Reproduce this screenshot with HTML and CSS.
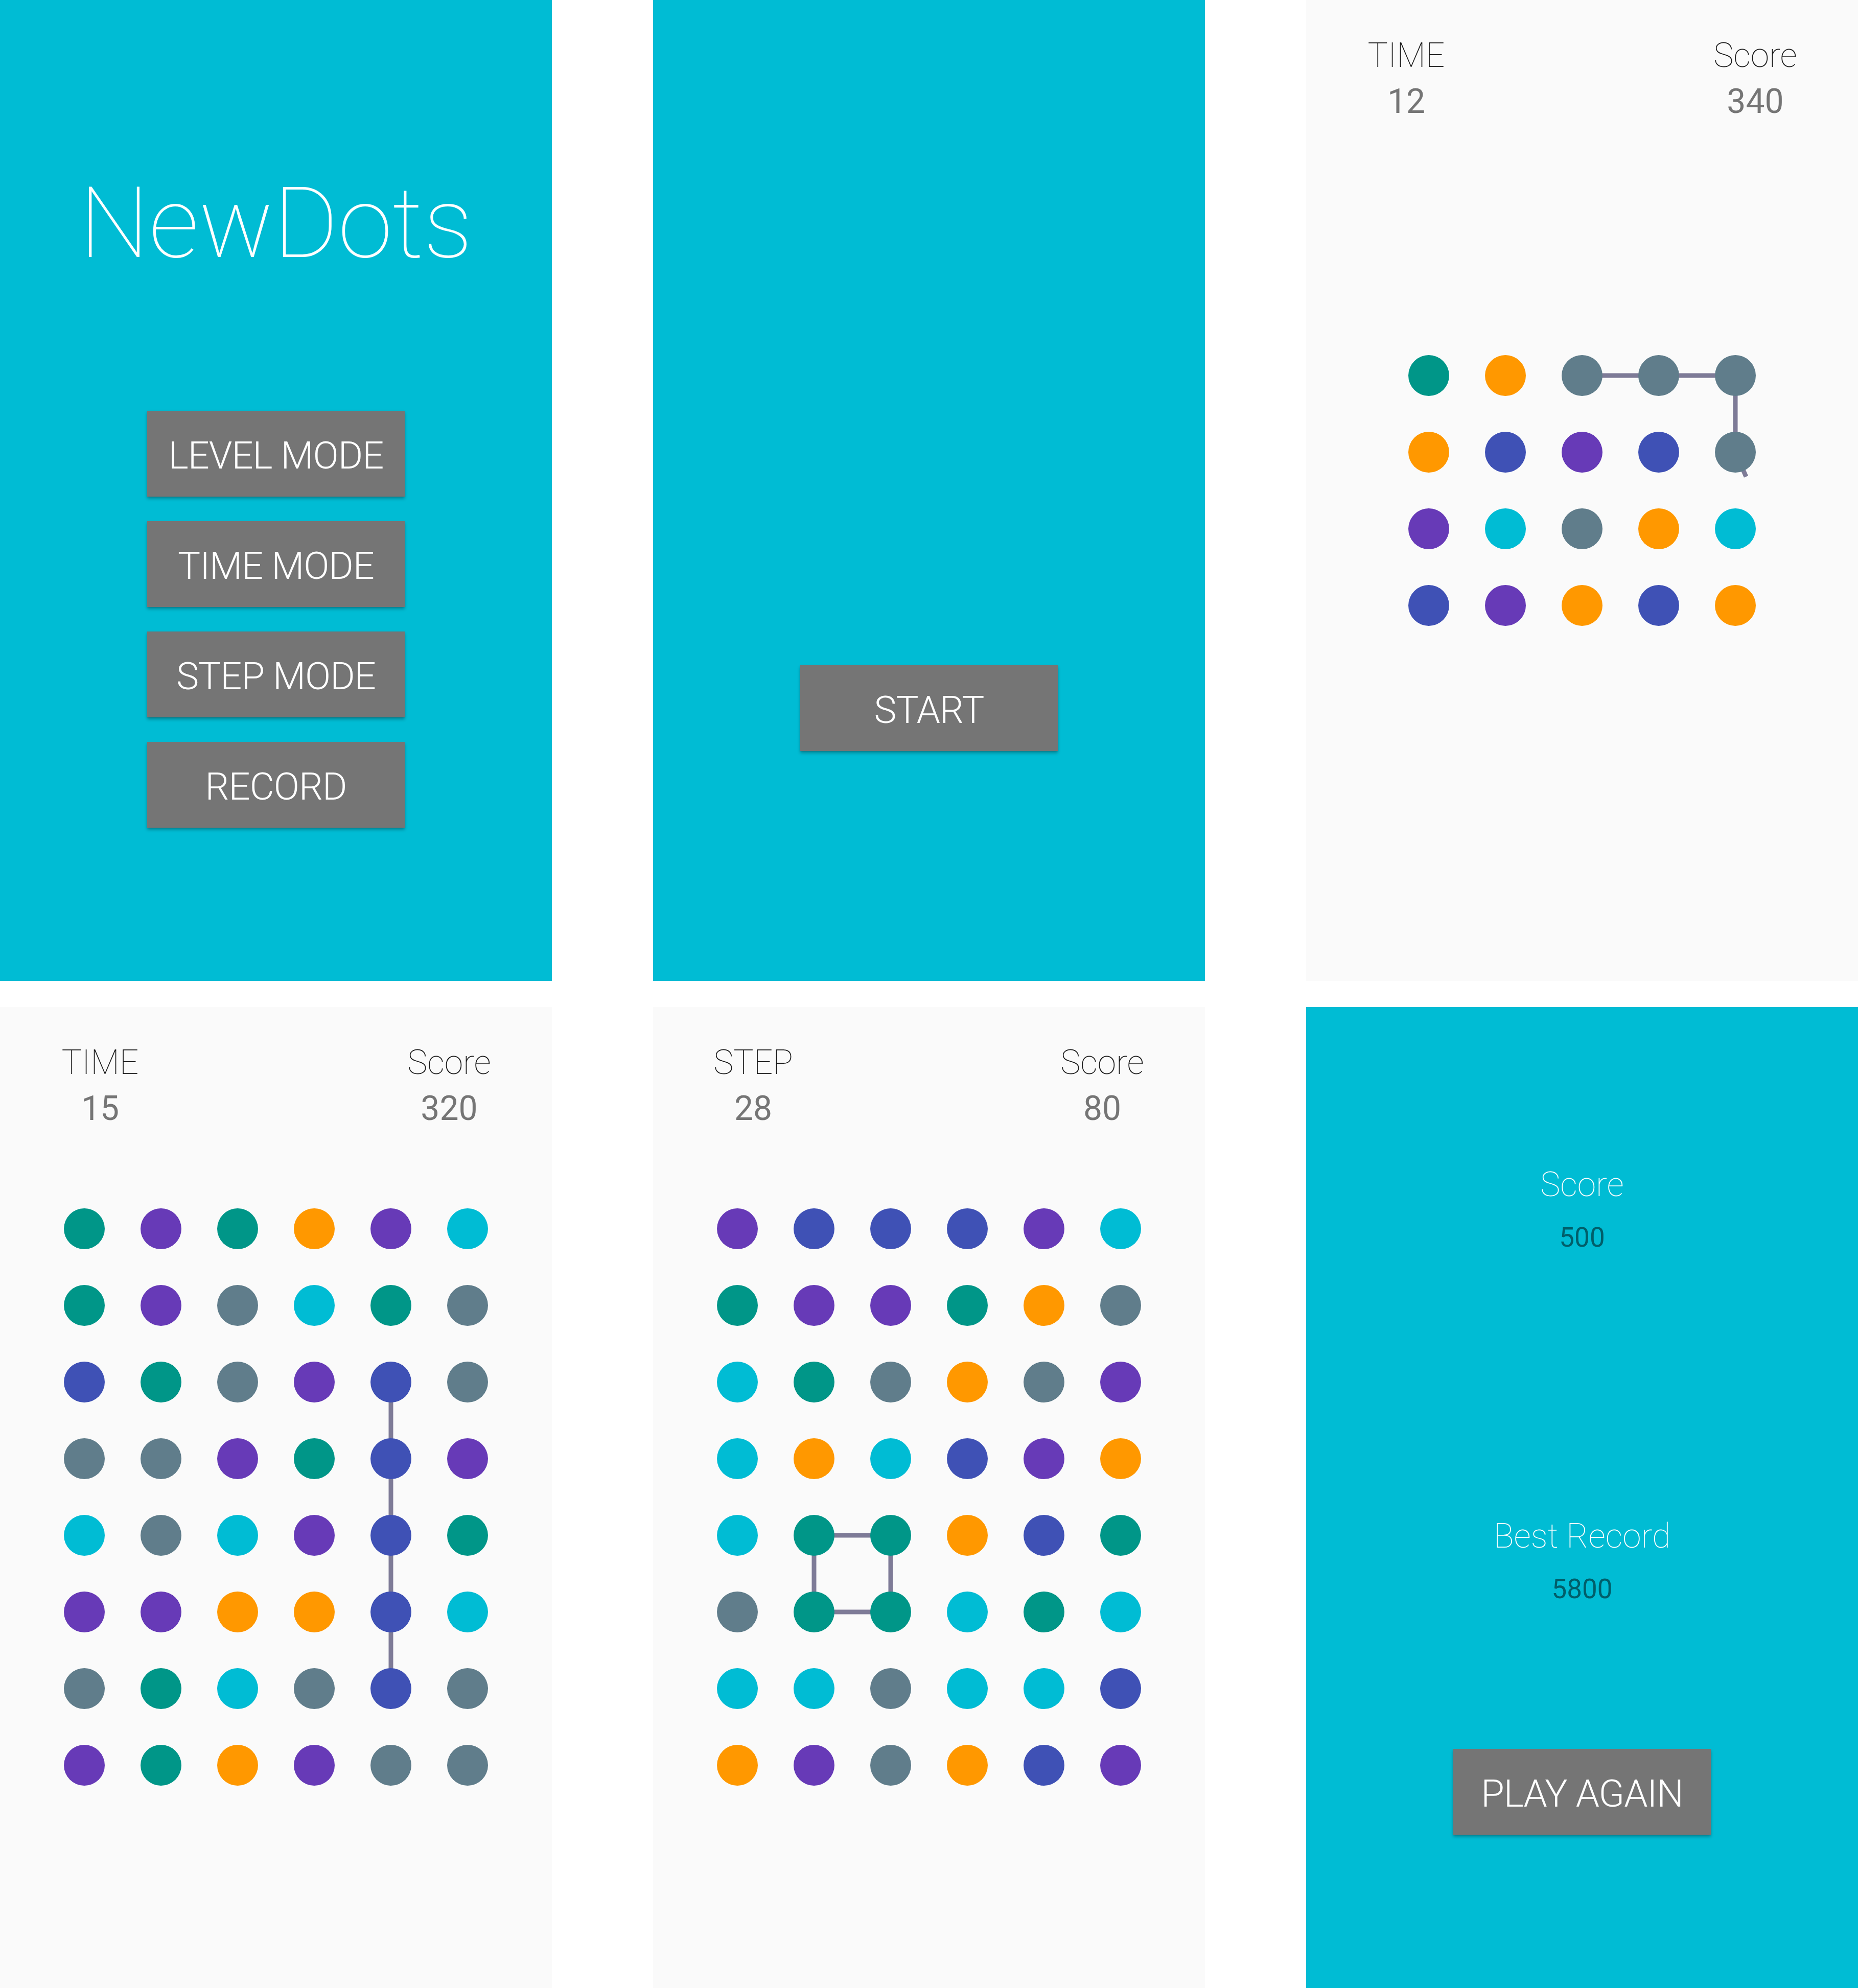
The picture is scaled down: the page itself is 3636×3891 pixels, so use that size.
FILE: index.html
```html
<!DOCTYPE html>
<html lang="en">
<head>
<meta charset="utf-8">
<title>NewDots screens</title>
<link rel="stylesheet" href="styles.css">
</head>
<body>
<main class="screens">

  <section class="screen screen--accent menu">
    <h1 class="title">NewDots</h1>
    <div class="menu-buttons">
      <button class="btn">LEVEL MODE</button>
      <button class="btn">TIME MODE</button>
      <button class="btn">STEP MODE</button>
      <button class="btn">RECORD</button>
    </div>
  </section>

  <section class="screen screen--accent start">
    <button class="btn">START</button>
  </section>

  <section class="screen game">
    <header class="hud">
      <div class="stat"><div class="stat-label">TIME</div><div class="stat-value">12</div></div>
      <div></div>
      <div class="stat"><div class="stat-label">Score</div><div class="stat-value">340</div></div>
    </header>
    <svg class="board board--short" viewBox="0 240 1080 1060" width="1080" height="1060">
      <g class="link">
        <polyline points="540,735 840,735 840,885" />
        <line x1="840" y1="885" x2="861" y2="933" />
      </g>
      <circle class="d-teal" cx="240" cy="735" r="40"/><circle class="d-orange" cx="390" cy="735" r="40"/><circle class="d-grey" cx="540" cy="735" r="40"/><circle class="d-grey" cx="690" cy="735" r="40"/><circle class="d-grey" cx="840" cy="735" r="40"/>
      <circle class="d-orange" cx="240" cy="885" r="40"/><circle class="d-indigo" cx="390" cy="885" r="40"/><circle class="d-purple" cx="540" cy="885" r="40"/><circle class="d-indigo" cx="690" cy="885" r="40"/><circle class="d-grey" cx="840" cy="885" r="40"/>
      <circle class="d-purple" cx="240" cy="1035" r="40"/><circle class="d-cyan" cx="390" cy="1035" r="40"/><circle class="d-grey" cx="540" cy="1035" r="40"/><circle class="d-orange" cx="690" cy="1035" r="40"/><circle class="d-cyan" cx="840" cy="1035" r="40"/>
      <circle class="d-indigo" cx="240" cy="1185" r="40"/><circle class="d-purple" cx="390" cy="1185" r="40"/><circle class="d-orange" cx="540" cy="1185" r="40"/><circle class="d-indigo" cx="690" cy="1185" r="40"/><circle class="d-orange" cx="840" cy="1185" r="40"/>
    </svg>
  </section>

  <section class="screen game">
    <header class="hud">
      <div class="stat"><div class="stat-label">TIME</div><div class="stat-value">15</div></div>
      <div></div>
      <div class="stat"><div class="stat-label">Score</div><div class="stat-value">320</div></div>
    </header>
    <svg class="board" viewBox="0 240 1080 1400" width="1080" height="1400">
      <g class="link">
        <line x1="765" y1="734" x2="765" y2="1334" />
      </g>
      <circle class="d-teal" cx="165" cy="434" r="40"/><circle class="d-purple" cx="315" cy="434" r="40"/><circle class="d-teal" cx="465" cy="434" r="40"/><circle class="d-orange" cx="615" cy="434" r="40"/><circle class="d-purple" cx="765" cy="434" r="40"/><circle class="d-cyan" cx="915" cy="434" r="40"/>
      <circle class="d-teal" cx="165" cy="584" r="40"/><circle class="d-purple" cx="315" cy="584" r="40"/><circle class="d-grey" cx="465" cy="584" r="40"/><circle class="d-cyan" cx="615" cy="584" r="40"/><circle class="d-teal" cx="765" cy="584" r="40"/><circle class="d-grey" cx="915" cy="584" r="40"/>
      <circle class="d-indigo" cx="165" cy="734" r="40"/><circle class="d-teal" cx="315" cy="734" r="40"/><circle class="d-grey" cx="465" cy="734" r="40"/><circle class="d-purple" cx="615" cy="734" r="40"/><circle class="d-indigo" cx="765" cy="734" r="40"/><circle class="d-grey" cx="915" cy="734" r="40"/>
      <circle class="d-grey" cx="165" cy="884" r="40"/><circle class="d-grey" cx="315" cy="884" r="40"/><circle class="d-purple" cx="465" cy="884" r="40"/><circle class="d-teal" cx="615" cy="884" r="40"/><circle class="d-indigo" cx="765" cy="884" r="40"/><circle class="d-purple" cx="915" cy="884" r="40"/>
      <circle class="d-cyan" cx="165" cy="1034" r="40"/><circle class="d-grey" cx="315" cy="1034" r="40"/><circle class="d-cyan" cx="465" cy="1034" r="40"/><circle class="d-purple" cx="615" cy="1034" r="40"/><circle class="d-indigo" cx="765" cy="1034" r="40"/><circle class="d-teal" cx="915" cy="1034" r="40"/>
      <circle class="d-purple" cx="165" cy="1184" r="40"/><circle class="d-purple" cx="315" cy="1184" r="40"/><circle class="d-orange" cx="465" cy="1184" r="40"/><circle class="d-orange" cx="615" cy="1184" r="40"/><circle class="d-indigo" cx="765" cy="1184" r="40"/><circle class="d-cyan" cx="915" cy="1184" r="40"/>
      <circle class="d-grey" cx="165" cy="1334" r="40"/><circle class="d-teal" cx="315" cy="1334" r="40"/><circle class="d-cyan" cx="465" cy="1334" r="40"/><circle class="d-grey" cx="615" cy="1334" r="40"/><circle class="d-indigo" cx="765" cy="1334" r="40"/><circle class="d-grey" cx="915" cy="1334" r="40"/>
      <circle class="d-purple" cx="165" cy="1484" r="40"/><circle class="d-teal" cx="315" cy="1484" r="40"/><circle class="d-orange" cx="465" cy="1484" r="40"/><circle class="d-purple" cx="615" cy="1484" r="40"/><circle class="d-grey" cx="765" cy="1484" r="40"/><circle class="d-grey" cx="915" cy="1484" r="40"/>
    </svg>
  </section>

  <section class="screen game">
    <header class="hud">
      <div class="stat"><div class="stat-label">STEP</div><div class="stat-value">28</div></div>
      <div></div>
      <div class="stat"><div class="stat-label">Score</div><div class="stat-value">80</div></div>
    </header>
    <svg class="board" viewBox="0 240 1080 1400" width="1080" height="1400">
      <g class="link">
        <polygon points="315,1034 465,1034 465,1184 315,1184" />
      </g>
      <circle class="d-purple" cx="165" cy="434" r="40"/><circle class="d-indigo" cx="315" cy="434" r="40"/><circle class="d-indigo" cx="465" cy="434" r="40"/><circle class="d-indigo" cx="615" cy="434" r="40"/><circle class="d-purple" cx="765" cy="434" r="40"/><circle class="d-cyan" cx="915" cy="434" r="40"/>
      <circle class="d-teal" cx="165" cy="584" r="40"/><circle class="d-purple" cx="315" cy="584" r="40"/><circle class="d-purple" cx="465" cy="584" r="40"/><circle class="d-teal" cx="615" cy="584" r="40"/><circle class="d-orange" cx="765" cy="584" r="40"/><circle class="d-grey" cx="915" cy="584" r="40"/>
      <circle class="d-cyan" cx="165" cy="734" r="40"/><circle class="d-teal" cx="315" cy="734" r="40"/><circle class="d-grey" cx="465" cy="734" r="40"/><circle class="d-orange" cx="615" cy="734" r="40"/><circle class="d-grey" cx="765" cy="734" r="40"/><circle class="d-purple" cx="915" cy="734" r="40"/>
      <circle class="d-cyan" cx="165" cy="884" r="40"/><circle class="d-orange" cx="315" cy="884" r="40"/><circle class="d-cyan" cx="465" cy="884" r="40"/><circle class="d-indigo" cx="615" cy="884" r="40"/><circle class="d-purple" cx="765" cy="884" r="40"/><circle class="d-orange" cx="915" cy="884" r="40"/>
      <circle class="d-cyan" cx="165" cy="1034" r="40"/><circle class="d-teal" cx="315" cy="1034" r="40"/><circle class="d-teal" cx="465" cy="1034" r="40"/><circle class="d-orange" cx="615" cy="1034" r="40"/><circle class="d-indigo" cx="765" cy="1034" r="40"/><circle class="d-teal" cx="915" cy="1034" r="40"/>
      <circle class="d-grey" cx="165" cy="1184" r="40"/><circle class="d-teal" cx="315" cy="1184" r="40"/><circle class="d-teal" cx="465" cy="1184" r="40"/><circle class="d-cyan" cx="615" cy="1184" r="40"/><circle class="d-teal" cx="765" cy="1184" r="40"/><circle class="d-cyan" cx="915" cy="1184" r="40"/>
      <circle class="d-cyan" cx="165" cy="1334" r="40"/><circle class="d-cyan" cx="315" cy="1334" r="40"/><circle class="d-grey" cx="465" cy="1334" r="40"/><circle class="d-cyan" cx="615" cy="1334" r="40"/><circle class="d-cyan" cx="765" cy="1334" r="40"/><circle class="d-indigo" cx="915" cy="1334" r="40"/>
      <circle class="d-orange" cx="165" cy="1484" r="40"/><circle class="d-purple" cx="315" cy="1484" r="40"/><circle class="d-grey" cx="465" cy="1484" r="40"/><circle class="d-orange" cx="615" cy="1484" r="40"/><circle class="d-indigo" cx="765" cy="1484" r="40"/><circle class="d-purple" cx="915" cy="1484" r="40"/>
    </svg>
  </section>

  <section class="screen screen--accent result">
    <div class="result-label">Score</div>
    <div class="result-value">500</div>
    <div class="result-label result-label--best">Best Record</div>
    <div class="result-value">5800</div>
    <button class="btn btn--again">PLAY AGAIN</button>
  </section>

</main>
</body>
</html>
```

FILE: styles.css
```css
* {
  box-sizing: border-box;
  margin: 0;
  padding: 0;
}

body {
  margin: 0;
  background: #ffffff;
  font-family: Roboto, "Liberation Sans", sans-serif;
}

.screens {
  display: grid;
  grid-template-columns: repeat(3, 1080px);
  grid-template-rows: repeat(2, 1920px);
  column-gap: 198px;
  row-gap: 51px;
  width: 3636px;
}

.screen {
  background: #fafafa;
  display: flex;
  flex-direction: column;
  align-items: center;
  overflow: hidden;
}

.screen--accent {
  background: #00bcd4;
}

/* menu */
.title {
  margin-top: 341px;
  font-size: 193px;
  line-height: 193px;
  font-weight: 100;
  color: #ffffff;
}

.menu-buttons {
  margin-top: 270px;
  display: flex;
  flex-direction: column;
  gap: 48px;
}

.btn {
  width: 504px;
  height: 168px;
  border: none;
  background: #757575;
  color: #ffffff;
  font-family: Roboto, "Liberation Sans", sans-serif;
  font-size: 74px;
  line-height: 74px;
  font-weight: 300;
  letter-spacing: -1px;
  display: flex;
  align-items: center;
  justify-content: center;
  padding-top: 7px;
  box-shadow: 0 4px 6px rgba(0, 0, 0, 0.28), 0 1px 2px rgba(0, 0, 0, 0.12);
}

/* start */
.start {
  padding-top: 1302px;
}

/* game */
.hud {
  width: 100%;
  height: 240px;
  padding-top: 76px;
  display: grid;
  grid-template-columns: 392px 1fr 402px;
}

.stat {
  display: flex;
  flex-direction: column;
  align-items: center;
}

.stat-label {
  font-size: 66px;
  line-height: 66px;
  font-weight: 100;
  color: #1a1a1a;
}

.stat-value {
  margin-top: 24px;
  font-size: 66px;
  line-height: 66px;
  font-weight: 400;
  color: #757575;
}

.board {
  display: block;
  width: 1080px;
}

.link {
  fill: none;
  stroke: #7e7b97;
  stroke-width: 9;
  stroke-linecap: butt;
}

.d-teal { fill: #009688; }
.d-orange { fill: #ff9800; }
.d-grey { fill: #607d8b; }
.d-indigo { fill: #3f51b5; }
.d-purple { fill: #673ab7; }
.d-cyan { fill: #00bcd4; }

/* result */
.result-label {
  margin-top: 315px;
  font-size: 66px;
  line-height: 66px;
  font-weight: 100;
  color: #ffffff;
}

.result-label--best {
  margin-top: 525px;
}

.result-value {
  margin-top: 44px;
  font-size: 53px;
  line-height: 53px;
  font-weight: 400;
  color: #005e6a;
}

.btn--again {
  margin-top: 286px;
}
```
